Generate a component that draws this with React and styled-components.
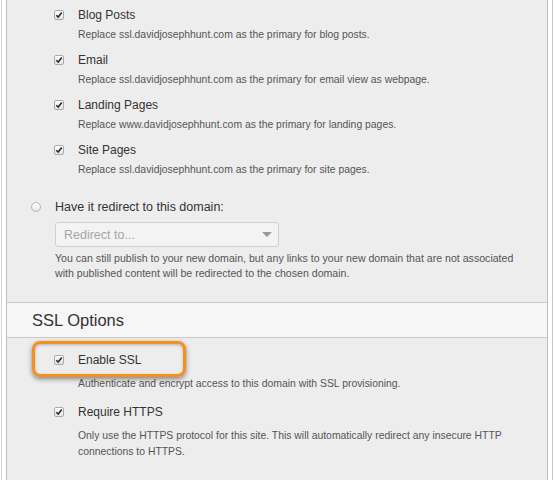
import React from "react";
import styled, { createGlobalStyle } from "styled-components";

const GlobalStyle = createGlobalStyle`
  html, body {
    margin: 0;
    padding: 0;
    background: #fff;
  }
  body {
    font-family: "Liberation Sans", Arial, sans-serif;
    color: #333;
    overflow: hidden;
  }
`;

const domainOptions = [
  { label: "Blog Posts", desc: "Replace ssl.davidjosephhunt.com as the primary for blog posts." },
  { label: "Email", desc: "Replace ssl.davidjosephhunt.com as the primary for email view as webpage." },
  { label: "Landing Pages", desc: "Replace www.davidjosephhunt.com as the primary for landing pages." },
  { label: "Site Pages", desc: "Replace ssl.davidjosephhunt.com as the primary for site pages." },
];

const CheckBox = () => (
  <Box>
    <svg width="8" height="8" viewBox="0 0 8 8">
      <path d="M1.3 4.2 L3.2 6.1 L6.8 1.6" fill="none" stroke="#2b2b2b" strokeWidth="1.6" />
    </svg>
  </Box>
);

const App = () => {
  return (
    <>
      <GlobalStyle />
      <Frame>
        <Panel>
          <Section $top={6} $bottom={21}>
            <OptionList>
              {domainOptions.map((o) => (
                <Option key={o.label} $space={8}>
                  <OptionLabel>
                    <CheckBox />
                    {o.label}
                  </OptionLabel>
                  <OptionDesc $gap={3}>{o.desc}</OptionDesc>
                </Option>
              ))}
            </OptionList>
            <RadioGroup>
              <RadioLabel>
                <Radio />
                Have it redirect to this domain:
              </RadioLabel>
              <Select>
                <span>Redirect to...</span>
                <Arrow />
              </Select>
              <HelpText>
                You can still publish to your new domain, but any links to your new domain that are not associated
                <br />
                with published content will be redirected to the chosen domain.
              </HelpText>
            </RadioGroup>
          </Section>

          <SectionHeader>SSL Options</SectionHeader>

          <Section $top={13} $bottom={30}>
            <OptionList>
              <Option $space={11}>
                <Highlight />
                <OptionLabel>
                  <CheckBox />
                  Enable SSL
                </OptionLabel>
                <OptionDesc $gap={7}>
                  Authenticate and encrypt access to this domain with SSL provisioning.
                </OptionDesc>
              </Option>
              <Option $space={0}>
                <OptionLabel>
                  <CheckBox />
                  Require HTTPS
                </OptionLabel>
                <OptionDesc $gap={7}>
                  Only use the HTTPS protocol for this site. This will automatically redirect any insecure HTTP
                  <br />
                  connections to HTTPS.
                </OptionDesc>
              </Option>
            </OptionList>
          </Section>
        </Panel>
      </Frame>
    </>
  );
};

export default App;

const Frame = styled.div`
  margin-left: 1px;
  width: 552px;
  height: 480px;
  box-sizing: border-box;
  padding: 0 4px;
  border-left: 1px solid #d2d2d2;
  border-right: 1px solid #c6c6c6;
`;

const Panel = styled.div`
  width: 542px;
  min-height: 480px;
  box-sizing: border-box;
  background: #ededed;
  border-left: 1px solid #bdbdbd;
  border-right: 1px solid #bdbdbd;
`;

const Section = styled.div`
  padding: ${(p) => p.$top}px 0 ${(p) => p.$bottom}px;
`;

const OptionList = styled.div`
  padding-left: 47px;
`;

const Option = styled.div`
  position: relative;
  margin-bottom: ${(p) => p.$space}px;
`;

const OptionLabel = styled.div`
  display: flex;
  align-items: center;
  gap: 14px;
  height: 18px;
  font-size: 12px;
  color: #333;
`;

const Box = styled.span`
  display: inline-flex;
  align-items: center;
  justify-content: center;
  width: 10px;
  height: 10px;
  box-sizing: border-box;
  border: 1px solid #a9a9a9;
  border-radius: 2px;
  background: linear-gradient(#ffffff, #e4e4e4);
`;

const OptionDesc = styled.div`
  margin-top: ${(p) => p.$gap}px;
  padding-left: 24px;
  font-size: 10.4px;
  line-height: 16px;
  color: #555;
`;

const Highlight = styled.div`
  position: absolute;
  left: -22px;
  top: -10px;
  width: 154px;
  height: 36px;
  box-sizing: border-box;
  border: 3px solid #f5901e;
  border-radius: 8px;
  box-shadow: 0 2px 5px rgba(0, 0, 0, 0.45), inset 0 1px 3px rgba(0, 0, 0, 0.25);
  pointer-events: none;
`;

const RadioGroup = styled.div`
  margin-top: 20px;
  padding-left: 24px;
`;

const RadioLabel = styled.div`
  display: flex;
  align-items: center;
  gap: 14px;
  height: 18px;
  font-size: 12.5px;
  color: #333;
`;

const Radio = styled.span`
  width: 10px;
  height: 10px;
  box-sizing: border-box;
  border-radius: 50%;
  border: 1px solid #b5b5b5;
  background: linear-gradient(#ffffff, #e6e6e6);
`;

const Select = styled.div`
  display: flex;
  align-items: center;
  justify-content: space-between;
  margin: 6px 0 0 24px;
  width: 224px;
  height: 25px;
  box-sizing: border-box;
  padding: 0 6px 0 8px;
  border: 1px solid #d0d0d0;
  border-radius: 3px;
  background: #f3f3f3;
  font-size: 12.5px;
  color: #a6a6a6;
`;

const Arrow = styled.span`
  width: 0;
  height: 0;
  border-left: 5px solid transparent;
  border-right: 5px solid transparent;
  border-top: 5px solid #9a9a9a;
`;

const HelpText = styled.div`
  margin: 4px 0 0 24px;
  font-size: 10.6px;
  line-height: 15px;
  color: #555;
`;

const SectionHeader = styled.div`
  display: flex;
  align-items: center;
  height: 34px;
  padding-left: 25px;
  background: #f6f6f6;
  border-top: 1px solid #c9c9c9;
  border-bottom: 1px solid #c9c9c9;
  font-size: 16.5px;
  color: #333;
`;
